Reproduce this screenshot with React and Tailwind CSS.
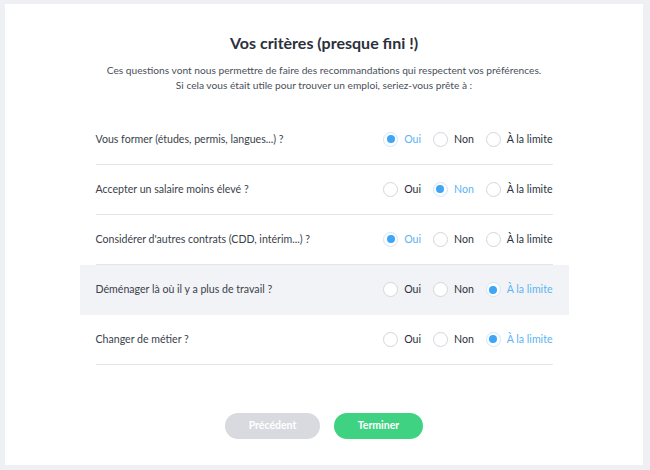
import React from "react";

const questions = [
  { label: "Vous former (études, permis, langues...) ?", value: "oui" },
  { label: "Accepter un salaire moins élevé ?", value: "non" },
  { label: "Considérer d'autres contrats (CDD, intérim...) ?", value: "oui" },
  { label: "Déménager là où il y a plus de travail ?", value: "limite", highlight: true },
  { label: "Changer de métier ?", value: "limite" },
];

const options = [
  { key: "oui", label: "Oui" },
  { key: "non", label: "Non" },
  { key: "limite", label: "À la limite" },
];

const Radio = ({ checked, label }) => (
  <div className="flex items-center gap-[6px]">
    <span
      className={
        "w-[15px] h-[15px] rounded-full border flex items-center justify-center bg-white " +
        (checked ? "border-[#cfe6fb]" : "border-[#d3d6dc]")
      }
    >
      {checked && <span className="w-[8px] h-[8px] rounded-full bg-[#3ea6f5]" />}
    </span>
    <span className={checked ? "text-[#5cb3f3]" : "text-[#2b303b]"}>{label}</span>
  </div>
);

const App = () => {
  return (
    <div
      className="w-[650px] h-[470px] bg-[#eef0f3] pl-[5px] pr-[7px] pt-[4px] pb-[5px]"
      style={{ fontFamily: "Lato, 'Noto Sans', sans-serif" }}
    >
      <div className="bg-white h-full flex flex-col items-center">
        <h1 className="mt-[27px] text-[16px] leading-[24px] font-bold text-[#2b303b]">
          Vos critères (presque fini !)
        </h1>
        <p className="mt-[8px] text-[10.2px] leading-[15px] text-[#4a4f5a] text-center">
          Ces questions vont nous permettre de faire des recommandations qui respectent vos préférences.
          <br />
          Si cela vous était utile pour trouver un emploi, seriez-vous prête à :
        </p>

        <div className="mt-[22px] w-[489px]">
          {questions.map((q, i) => (
            <div key={i} className={"h-[50px] px-4 " + (q.highlight ? "bg-[#f2f3f6]" : "")}>
              <div
                className={
                  "h-full flex items-center justify-between text-[10.6px] " +
                  (q.highlight ? "" : "border-b border-[#e4e5e8]")
                }
              >
                <span className="text-[#3a3f4a]">{q.label}</span>
                <div className="flex items-center gap-[12px]">
                  {options.map((o) => (
                    <Radio key={o.key} checked={q.value === o.key} label={o.label} />
                  ))}
                </div>
              </div>
            </div>
          ))}
        </div>

        <div className="mt-[48px] flex gap-[14px] text-[10.5px] font-bold text-white">
          <button className="w-[95px] h-[26px] rounded-full bg-[#d9dadf]">Précédent</button>
          <button className="w-[89px] h-[26px] rounded-full bg-[#3fd282]">Terminer</button>
        </div>
      </div>
    </div>
  );
};

export default App;
